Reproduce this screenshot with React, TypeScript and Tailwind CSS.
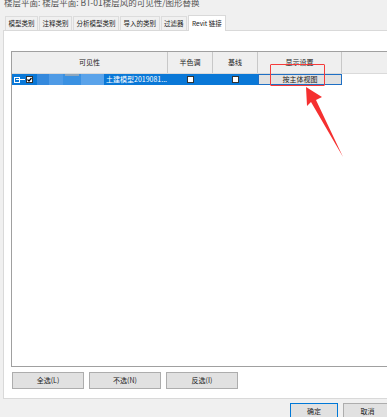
import React from 'react'

const font = { fontFamily: '"Noto Sans CJK SC", "Microsoft YaHei", sans-serif' }

const tabs = ['模型类别', '注释类别', '分析模型类别', '导入的类别', '过滤器']

function Box({ checked = false }: { checked?: boolean }) {
  return (
    <span className="flex h-[7px] w-[7px] items-center justify-center border border-[#333] bg-white">
      {checked && (
        <svg width="5" height="5" viewBox="0 0 5 5">
          <path d="M0.5 2.5 L2 4 L4.5 1" stroke="#000" strokeWidth="1.2" fill="none" />
        </svg>
      )}
    </span>
  )
}

export default function App() {
  return (
    <div className="relative h-[417px] w-[387px] overflow-hidden bg-[#f0f0f0] text-[#222]" style={font}>
      {/* 标题 */}
      <div className="mt-[-5px] h-[14px] whitespace-nowrap pl-[4px] text-[8.5px] leading-[14px] text-[#555]">
        楼层平面: 楼层平面: BT-01楼层风的可见性/图形替换
      </div>

      {/* 标签页 */}
      <div className="mt-[6px] flex items-end pl-[5px] text-[6.5px]">
        {tabs.map(t => (
          <div key={t} className="mr-[1px] flex h-[14px] items-center border border-b-0 border-[#dcdcdc] bg-[#f0f0f0] px-[2.5px] leading-none">
            {t}
          </div>
        ))}
        <div className="relative z-10 mb-[-1px] flex h-[16px] items-center border border-b-0 border-[#d9d9d9] bg-white px-[3px] leading-none">
          Revit 链接
        </div>
      </div>

      {/* 面板 */}
      <div className="ml-[3px] flex h-[369px] w-[400px] flex-col border border-[#d9d9d9] bg-white pl-[7px] pt-[20px]">
        <div className="flex h-[316px] w-[390px] flex-col border-l border-t border-b border-[#a0a0a0] bg-white text-[7px]">
          {/* 表头 */}
          <div className="flex h-[22px] border-b border-[#dadada] bg-[#efefef]">
            <div className="flex w-[156px] items-center justify-center border-r border-[#c8c8c8]">可见性</div>
            <div className="flex w-[45px] items-center justify-center border-r border-[#c8c8c8]">半色调</div>
            <div className="flex w-[45px] items-center justify-center border-r border-[#c8c8c8]">基线</div>
            <div className="flex w-[84px] items-center justify-center border-r border-[#c8c8c8]">显示设置</div>
            <div className="flex-1" />
          </div>
          {/* 选中行 */}
          <div className="flex h-[11px]">
            <div className="flex w-[246px] bg-[#0a78d7]">
              <div className="flex w-[156px] items-center">
                <span className="ml-[2px] flex h-[6px] w-[6px] items-center justify-center border border-white">
                  <span className="h-px w-[3px] bg-white" />
                </span>
                <span className="h-px w-[5px] bg-white" />
                <span className="ml-[1px]">
                  <Box checked />
                </span>
                <div className="ml-[4px] flex h-full w-[67px]">
                  <div className="h-full w-[12px] bg-[#3489dd]" />
                  <div className="h-full w-[14px] bg-[#4f9be6]" />
                  <div className="relative h-full w-[18px] bg-[#3a91e2]">
                    <span className="absolute left-[2px] top-0 h-[2px] w-[14px] bg-[#8aa6c0]" />
                  </div>
                  <div className="h-full w-[23px] bg-[#5aa3ea]" />
                </div>
                <span className="ml-[2px] whitespace-nowrap leading-none text-white">土建模型2019081...</span>
              </div>
              <div className="flex w-[45px] items-center justify-center">
                <Box />
              </div>
              <div className="flex w-[45px] items-center justify-center">
                <Box />
              </div>
            </div>
            <div className="flex w-[84px] items-center justify-center border border-[#1e6fc4] bg-[#e1e1e1]">
              <span className="leading-none">按主体视图</span>
            </div>
          </div>
          <div className="flex-1" />
        </div>

        {/* 按钮 */}
        <div className="mt-[5px] flex gap-[5px] pl-[1px] text-[7px]">
          {['全选(L)', '不选(N)', '反选(I)'].map(b => (
            <div key={b} className="flex h-[17px] w-[72px] items-center justify-center border border-[#adadad] bg-[#e1e1e1]">
              {b}
            </div>
          ))}
        </div>
      </div>

      {/* 底部按钮 */}
      <div className="mt-[4px] flex justify-end gap-[5px] text-[7px]">
        <div className="flex h-[17px] w-[48px] items-center justify-center border border-[#0078d7] bg-[#e1e1e1]">确定</div>
        <div className="mr-[-5px] flex h-[17px] w-[49px] items-center justify-center border border-[#adadad] bg-[#e1e1e1]">取消</div>
      </div>

      {/* 标注 */}
      <div className="absolute left-[270px] top-[64px] h-[22px] w-[55px] rounded-[1px] border-[1.5px] border-[#f53b3b]" />
      <svg className="absolute left-0 top-0" width="387" height="417" viewBox="0 0 387 417">
        <polygon points="306,87 322,97 316,100 343,157 311,102 307,106" fill="#f53030" />
      </svg>
    </div>
  )
}
